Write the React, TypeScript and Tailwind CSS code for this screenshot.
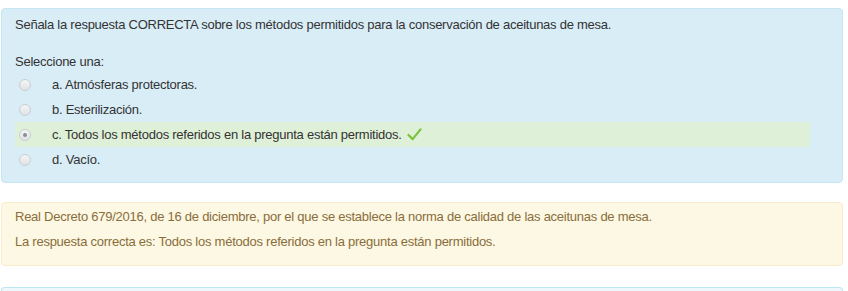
import React from "react";

function Radio({ checked }: { checked?: boolean }) {
  return (
    <span className="relative ml-[4px] flex h-[12px] w-[12px] shrink-0 items-center justify-center rounded-full border border-[#c9cdd1] bg-gradient-to-b from-[#f4f5f6] to-[#dfe2e5]">
      {checked && <span className="h-[4px] w-[4px] rounded-full bg-[#8a8f94]" />}
    </span>
  );
}

function Option({ label, checked, correct }: { label: string; checked?: boolean; correct?: boolean }) {
  return (
    <div className={`mr-[32px] flex h-[25px] items-center ${correct ? "bg-[#dff0d8]" : ""}`}>
      <Radio checked={checked} />
      <span className="ml-[21px] text-[#333]">{label}</span>
      {correct && (
        <svg className="ml-[5px]" width="15" height="13" viewBox="0 0 16 14">
          <path d="M1.5 7.5 L6 12 L14.5 1.5" fill="none" stroke="#7dc23c" strokeWidth="2.4" strokeLinecap="round" strokeLinejoin="round" />
        </svg>
      )}
    </div>
  );
}

export default function App() {
  return (
    <div className="h-[291px] overflow-hidden bg-white pl-[1px] pr-[5px] pt-[8px] text-[13px] leading-[20px] tracking-[-0.25px]" style={{ fontFamily: '"Liberation Sans", Arial, sans-serif' }}>
      <div className="rounded-[4px] border border-[#c5e6f2] bg-[#d9edf7] pl-[13px] pt-[6px] pb-[10px] text-[#333]">
        <div>Señala la respuesta CORRECTA sobre los métodos permitidos para la conservación de aceitunas de mesa.</div>
        <div className="mt-[17px]">Seleccione una:</div>
        <div className="flex flex-col">
          <Option label="a. Atmósferas protectoras." />
          <Option label="b. Esterilización." />
          <Option label="c. Todos los métodos referidos en la pregunta están permitidos." checked correct />
          <Option label="d. Vacío." />
        </div>
      </div>
      <div className="mt-[19px] flex flex-col gap-[5px] rounded-[4px] border border-[#faebcc] bg-[#fcf8e3] pl-[13px] pt-[4px] pb-[13px] text-[#8a6d3b]">
        <div>Real Decreto 679/2016, de 16 de diciembre, por el que se establece la norma de calidad de las aceitunas de mesa.</div>
        <div>La respuesta correcta es: Todos los métodos referidos en la pregunta están permitidos.</div>
      </div>
      <div className="mt-[21px] h-[20px] rounded-t-[4px] border border-b-0 border-[#bce8f1] bg-[#eef7fb]" />
    </div>
  );
}
